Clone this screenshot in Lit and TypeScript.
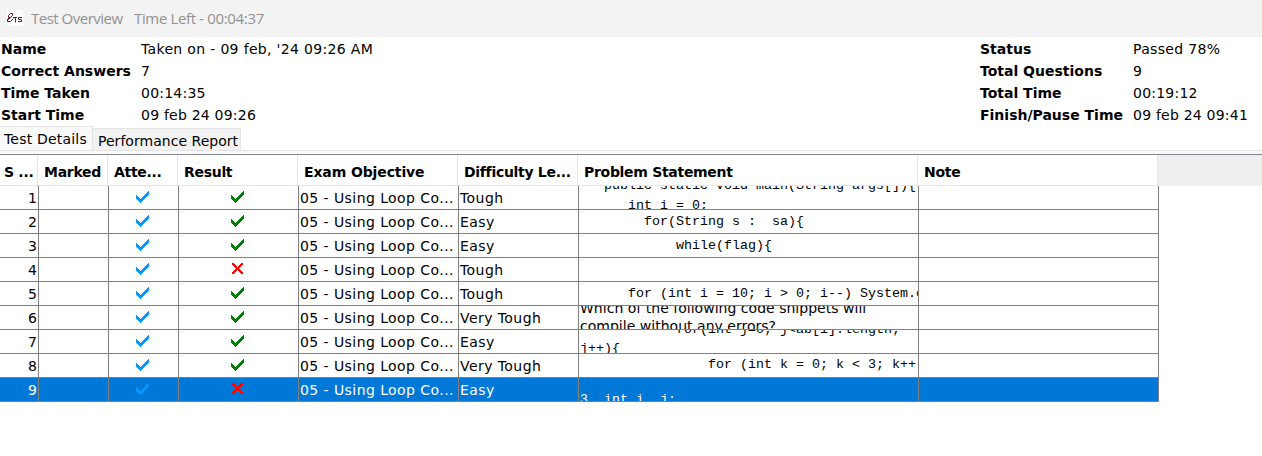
import { LitElement, html, css, svg } from "lit";
import { customElement, property } from "lit/decorators.js";

@customElement("status-mark")
class StatusMark extends LitElement {
  @property() kind = "attempted";
  static styles = css`
    :host { display: block; width: 13px; height: 13px; }
    svg { display: block; }
    .attempted { fill: #0397ff; }
    .right { fill: #008000; }
    .wrong { fill: #ff0000; }
  `;
  render() {
    return html`<svg width="13" height="13" viewBox="0 0 13 13" shape-rendering="crispEdges">
      ${this.kind === "wrong"
        ? svg`<path class="wrong" d="M1 0H3V1H4V2H5V3H6V4H7V3H8V2H9V1H10V0H12V2H11V3H10V4H9V5H8V6H9V7H10V8H11V9H12V11H10V10H9V9H8V8H7V7H6V8H5V9H4V10H3V11H1V9H2V8H3V7H4V6H5V5H4V4H3V3H2V2H1Z"/>`
        : svg`<path class=${this.kind} d="M0 4H1L4 8L5 8L12 0H13V3L5 12H4L0 8Z"/>`}
    </svg>`;
  }
}

interface Row { mark: string; level: string; lines: { cls: string; text: string }[]; }

const rows: Row[] = [
  { mark: "right", level: "Tough", lines: [{ cls: "code p1", text: "   public static void main(String args[]){" }, { cls: "code p2", text: "      int i = 0;" }] },
  { mark: "right", level: "Easy", lines: [{ cls: "code mid", text: "        for(String s :  sa){" }] },
  { mark: "right", level: "Easy", lines: [{ cls: "code mid", text: "            while(flag){" }] },
  { mark: "wrong", level: "Tough", lines: [] },
  { mark: "right", level: "Tough", lines: [{ cls: "code mid", text: "      for (int i = 10; i > 0; i--) System.out" }] },
  { mark: "right", level: "Very Tough", lines: [{ cls: "prose q1", text: "Which of the following code snippets will" }, { cls: "prose q2", text: "compile without any errors?" }] },
  { mark: "right", level: "Easy", lines: [{ cls: "code r1", text: "            for(int j=0; j<ab[i].length;" }, { cls: "code r2", text: "j++){" }] },
  { mark: "right", level: "Very Tough", lines: [{ cls: "code high", text: "                for (int k = 0; k < 3; k++)" }] },
  { mark: "wrong", level: "Easy", lines: [{ cls: "code s1", text: "3  int i, j;" }] },
];

@customElement("app-root")
class AppRoot extends LitElement {
  static styles = css`
    :host { display: block; width: 1262px; height: 456px; overflow: hidden; background: #fff; color: #000;
      font: 14px/22px "DejaVu Sans", sans-serif; white-space: nowrap; }
    .title { display: flex; height: 37px; box-sizing: border-box; background: #f3f3f3; color: #929292;
      font: 15px/37px "Open Sans", sans-serif; }
    .logo { margin: 10px 8px 0 7px; display: block; }
    .name { width: 103px; letter-spacing: -0.5px; }
    .left { letter-spacing: -0.35px; }
    .info { display: flex; justify-content: space-between; height: 89px; padding: 1px 12px 0 1px; box-sizing: border-box; }
    .pairs { display: grid; grid-template-columns: 140px 260px; grid-auto-rows: 22px; }
    .pairs.end { grid-template-columns: 153px 117px; }
    .pairs span { letter-spacing: 0.22px; }
    .pairs span:nth-child(2) { letter-spacing: 0.33px; }
    .tabs { display: flex; align-items: flex-end; height: 24px; }
    .tab { box-sizing: border-box; border: 1px solid #e4e4e4; border-left: 0; border-bottom: 0; }
    .on { width: 93px; height: 24px; padding-left: 4px; line-height: 24px; background: #f9f9f9; letter-spacing: 0.2px; }
    .off { width: 148px; height: 22px; padding-left: 5px; line-height: 25px; background: #f2f2f2; letter-spacing: 0.03px; }
    .edge { height: 4px; box-sizing: border-box; border-top: 1px solid #e4e4e4; background: #f9f9f9; }
    .head { display: grid; grid-template-columns: 38px 70px 70px 120px 160px 120px 340px 240px 1fr; height: 32px;
      box-sizing: border-box; border-top: 1px solid #828790; background: #efefef; }
    .th { box-sizing: border-box; background: #fff; border-right: 1px solid #e5e5e5; border-bottom: 1px solid #e5e5e5;
      padding-left: 6px; line-height: 34px; font-weight: bold; letter-spacing: -0.3px; overflow: hidden; }
    .th:nth-child(5) { letter-spacing: -0.12px; }
    .th:first-child { padding-left: 4px; }
    .row { display: grid; grid-template-columns: 39px 70px 70px 120px 160px 120px 340px 240px; width: 1159px; height: 24px; }
    .cell { box-sizing: border-box; border-right: 1px solid #808080; border-bottom: 1px solid #808080; overflow: hidden;
      padding-left: 1px; line-height: 25px; height: 24px; letter-spacing: 0.43px; }
    .num { text-align: right; padding: 0 1px 0 0; letter-spacing: 0; }
    .att { padding: 5px 0 0 27px; }
    .res { padding: 5px 0 0 52px; }
    .sel { background: #0078d7; color: #fff; }
    .code { font: 13.33px/16px "Liberation Mono", monospace; white-space: pre; letter-spacing: 0; }
    .prose { line-height: 18px; letter-spacing: 0.02px; }
    .mid { margin-top: 4px; }
    .high { margin-top: 3px; }
    .p1 { margin-top: -8px; }
    .p2 { margin-top: 4px; }
    .q1 { margin-top: -7px; }
    .r1 { margin-top: -8px; }
    .r2 { margin-top: 3px; }
    .s1 { margin-top: 14px; }
  `;
  render() {
    const pairs = (list: string[][]) => list.map(([k, v]) => html`<b>${k}</b><span>${v}</span>`);
    return html`
      <div class="title">
        <svg class="logo" width="16" height="16" viewBox="0 0 16 16">
          <path fill="#fff" d="M0 0H16V16H0Z"/>
          <path fill="none" stroke="#7b1020" d="M0 9.500H1.500L5.500 5.500V3.500H3.500L1.500 5.500V7.500H4M2.500 7.500L.5 9.500V11.500H3.500L6.500 8.500M6 7.500H10M8.500 7.500V12.500M15 7.500H11.500V9.500H14.500V11.500H11"/>
        </svg>
        <span class="name">Test Overview</span><span class="left">Time Left - 00:04:37</span>
      </div>
      <div class="info">
        <div class="pairs">${pairs([["Name", "Taken on - 09 feb, '24 09:26 AM"], ["Correct Answers", "7"], ["Time Taken", "00:14:35"], ["Start Time", "09 feb 24 09:26"]])}</div>
        <div class="pairs end">${pairs([["Status", "Passed 78%"], ["Total Questions", "9"], ["Total Time", "00:19:12"], ["Finish/Pause Time", "09 feb 24 09:41"]])}</div>
      </div>
      <div class="tabs"><div class="tab on">Test Details</div><div class="tab off">Performance Report</div></div>
      <div class="edge"></div>
      <div class="head">${["S ...", "Marked", "Atte...", "Result", "Exam Objective", "Difficulty Le...", "Problem Statement", "Note"].map((t) => html`<div class="th">${t}</div>`)}</div>
      ${rows.map((r, i) => html`<div class="row ${i === 8 ? "sel" : ""}">
        <div class="cell num">${i + 1}</div><div class="cell"></div>
        <div class="cell att"><status-mark kind="attempted"></status-mark></div>
        <div class="cell res"><status-mark kind=${r.mark}></status-mark></div>
        <div class="cell">05 - Using Loop Co...</div><div class="cell">${r.level}</div>
        <div class="cell">${r.lines.map((l) => html`<div class=${l.cls}>${l.text}</div>`)}</div><div class="cell"></div>
      </div>`)}
    `;
  }
}
